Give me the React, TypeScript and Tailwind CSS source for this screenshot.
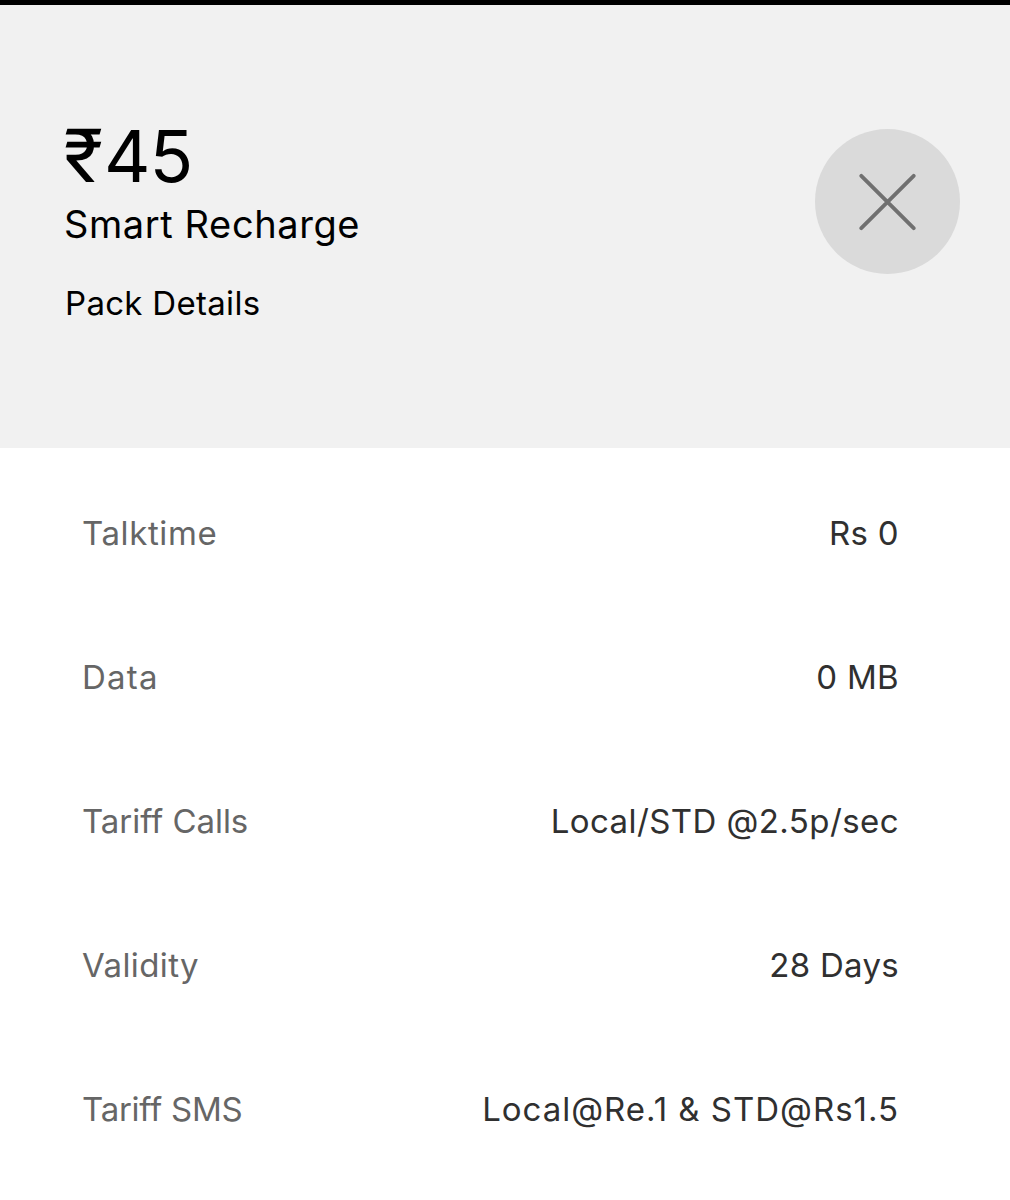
const details = [
  { label: "Talktime", value: "Rs 0", labelTracking: "tracking-[0.6px]", valueTracking: "tracking-[0.3px]" },
  { label: "Data", value: "0 MB", labelTracking: "tracking-[1.2px]", valueTracking: "tracking-[0.3px]" },
  { label: "Tariff Calls", value: "Local/STD @2.5p/sec", labelTracking: "tracking-[-0.05px]", valueTracking: "tracking-[0.42px]" },
  { label: "Validity", value: "28 Days", labelTracking: "tracking-[0.4px]", valueTracking: "tracking-[0.3px]" },
  { label: "Tariff SMS", value: "Local@Re.1 & STD@Rs1.5", labelTracking: "tracking-[-0.25px]", valueTracking: "tracking-[0.98px]" },
];

export default function App() {
  return (
    <div className="h-[1200px] w-[1010px] overflow-hidden bg-white font-[Inter,sans-serif]">
      {/* Header */}
      <div className="flex h-[448px] items-start justify-between border-t-[5px] border-black bg-[#f1f1f1] pr-[50px] pl-[64px] text-black">
        <div className="flex flex-col items-start pt-[111px] whitespace-nowrap">
          <h1 className="flex h-[80px] text-[72px] leading-[80px]">
            <span className="w-[40px] font-[Roboto,sans-serif] text-[75px]">₹</span>
            <span className="tracking-[-1px]">45</span>
          </h1>
          <p className="mt-[4px] h-[48px] text-[38px] leading-[48px] tracking-[0.6px]">Smart Recharge</p>
          <p className="mt-[34px] h-[42px] pl-px text-[33px] leading-[42px] tracking-[0.3px]">Pack Details</p>
        </div>

        <button aria-label="Close" className="mt-[124px] flex size-[145px] items-center justify-center rounded-full bg-[#dadada]">
          <svg viewBox="0 0 58 58" className="size-[58px]" fill="none" stroke="#707070" strokeWidth="3.8">
            <path d="M2.3 2.8 54.7 55.2M54.7 2.8 2.3 55.2" strokeLinecap="round" />
          </svg>
        </button>
      </div>

      {/* Pack details */}
      <dl className="flex flex-col pt-[14px] pr-[111px] pl-[82px]">
        {details.map(({ label, value, labelTracking, valueTracking }) => (
          <div key={label} className="flex h-[144px] items-center justify-between text-[33px] whitespace-nowrap">
            <dt className={`text-[#666] ${labelTracking}`}>{label}</dt>
            <dd className={`text-[#303030] ${valueTracking}`}>{value}</dd>
          </div>
        ))}
      </dl>
    </div>
  );
}
